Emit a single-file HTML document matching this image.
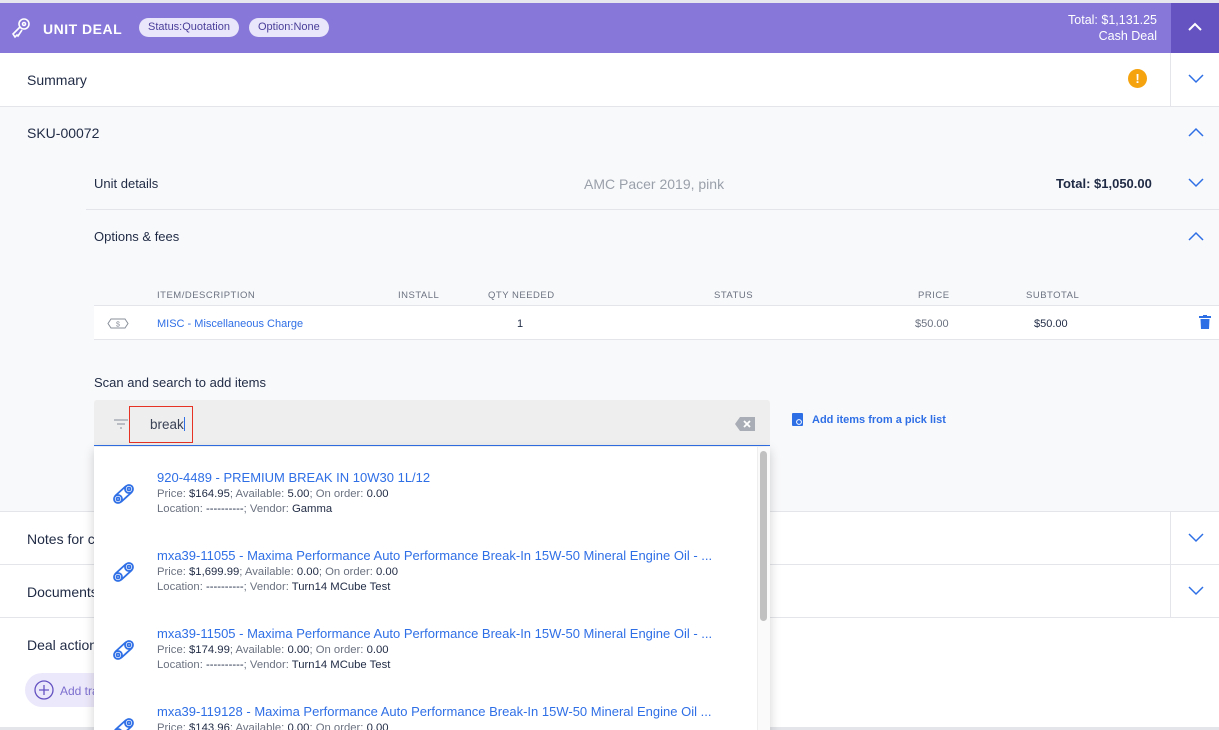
<!DOCTYPE html><html><head><style>
*{box-sizing:border-box;margin:0;padding:0}
html,body{width:1219px;height:730px;overflow:hidden}
body{font-family:"Liberation Sans",sans-serif;background:#fff;position:relative;color:#1f2a44}
.abs{position:absolute}
.hdr{left:0;top:3px;width:1219px;height:50px;background:#8677d9}
.pill{top:18px;height:19px;border-radius:10px;background:#e9e5fb;color:#4a3f99;font-size:11px;line-height:19px;padding:0 9px}
.row{left:0;width:1219px;border-bottom:1px solid #e3e5ea;background:#fff}
.t{font-size:14px;color:#1f2a44}
.sep{width:1px;background:#e3e5ea}
.th{font-size:9.5px;color:#6b7280;letter-spacing:.5px;top:290px}
.blue{color:#2f6fe6}
.it{left:157px;white-space:nowrap}
.it b{font-weight:normal;color:#1f2a44}
</style></head><body>
<div class="abs" style="left:0;top:0;width:1219px;height:3px;background:#e6e6ee"></div>
<div class="abs hdr"></div>
<div class="abs" style="left:1171px;top:3px;width:48px;height:50px;background:#6553c2"></div>
<svg class="abs" style="left:10px;top:17px" width="22" height="22" viewBox="0 0 22 22" fill="none" stroke="#fff" stroke-width="1.6"><circle cx="14" cy="7" r="5"/><circle cx="14" cy="7" r="1.5"/><path d="M10 10 L3 17 L5 20 L7 18 L8 19 L12 13"/></svg>
<div class="abs" style="left:43px;top:21px;color:#fff;font-size:14px;font-weight:bold;letter-spacing:.5px">UNIT DEAL</div>
<div class="abs pill" style="left:139px">Status:Quotation</div>
<div class="abs pill" style="left:249px">Option:None</div>
<div class="abs" style="right:62px;top:12px;color:#fff;font-size:12.5px;text-align:right;line-height:16px">Total: $1,131.25<br>Cash Deal</div>
<svg class="abs" style="left:1188px;top:22px" width="14" height="10" viewBox="0 0 14 10"><path d="M1 8 L7 2 L13 8" fill="none" stroke="#fff" stroke-width="2"/></svg>

<div class="abs row" style="top:53px;height:54px"></div>
<div class="abs t" style="left:27px;top:72px">Summary</div>
<div class="abs" style="left:1128px;top:69px;width:19px;height:19px;border-radius:50%;background:#f5a30f;color:#fff;font-size:13px;font-weight:bold;text-align:center;line-height:19px">!</div>
<div class="abs sep" style="left:1170px;top:53px;height:53px"></div>
<svg class="abs" style="left:1188px;top:74px" width="16" height="10" viewBox="0 0 16 10"><path d="M1 1 L8 8 L15 1" fill="none" stroke="#2f6fe6" stroke-width="1.5"/></svg>

<div class="abs" style="left:0;top:107px;width:1219px;height:405px;background:#f8f9fb;border-bottom:1px solid #e3e5ea"></div>
<div class="abs t" style="left:27px;top:125px">SKU-00072</div>
<svg class="abs" style="left:1188px;top:127px" width="16" height="10" viewBox="0 0 16 10"><path d="M1 9 L8 2 L15 9" fill="none" stroke="#2f6fe6" stroke-width="1.5"/></svg>
<div class="abs" style="left:94px;top:176px;font-size:13px">Unit details</div>
<div class="abs" style="left:584px;top:176px;font-size:14px;color:#9aa0aa">AMC Pacer 2019, pink</div>
<div class="abs" style="left:1056px;top:176px;font-size:13px;font-weight:bold">Total: $1,050.00</div>
<svg class="abs" style="left:1188px;top:178px" width="16" height="10" viewBox="0 0 16 10"><path d="M1 1 L8 8 L15 1" fill="none" stroke="#2f6fe6" stroke-width="1.5"/></svg>
<div class="abs" style="left:86px;top:209px;width:1133px;height:1px;background:#e3e5ea"></div>
<div class="abs" style="left:94px;top:229px;font-size:13px">Options &amp; fees</div>
<svg class="abs" style="left:1188px;top:231px" width="16" height="10" viewBox="0 0 16 10"><path d="M1 9 L8 2 L15 9" fill="none" stroke="#2f6fe6" stroke-width="1.5"/></svg>

<div class="abs th" style="left:157px">ITEM/DESCRIPTION</div>
<div class="abs th" style="left:398px">INSTALL</div>
<div class="abs th" style="left:488px">QTY NEEDED</div>
<div class="abs th" style="left:714px">STATUS</div>
<div class="abs th" style="left:918px">PRICE</div>
<div class="abs th" style="left:1026px">SUBTOTAL</div>
<div class="abs" style="left:94px;top:305px;width:1125px;height:35px;background:#fff;border-top:1px solid #e3e5ea;border-bottom:1px solid #e3e5ea"></div>
<svg class="abs" style="left:107px;top:318px" width="22" height="11" viewBox="0 0 22 11" fill="none" stroke="#8a909a"><path d="M4 1 H18 L21 5.5 L18 10 H4 L1 5.5 Z"/><text x="11" y="8.5" font-size="7" text-anchor="middle" fill="#8a909a" stroke="none" font-family="Liberation Sans">$</text></svg>
<div class="abs blue" style="left:157px;top:318px;font-size:11px">MISC - Miscellaneous Charge</div>
<div class="abs" style="left:517px;top:318px;font-size:11px">1</div>
<div class="abs" style="left:915px;top:318px;font-size:11px;color:#6b7280">$50.00</div>
<div class="abs" style="left:1034px;top:318px;font-size:11px">$50.00</div>
<svg class="abs" style="left:1199px;top:315px" width="12" height="14" viewBox="0 0 12 14" fill="#2f6fe6"><rect x="0" y="1" width="12" height="2"/><rect x="4" y="0" width="4" height="2"/><path d="M1.5 4 H10.5 L10 14 H2 Z"/></svg>

<div class="abs" style="left:94px;top:375px;font-size:13px">Scan and search to add items</div>
<div class="abs" style="left:94px;top:400px;width:676px;height:46px;background:#eeeeee;border-bottom:1.5px solid #2f6fe6;border-radius:3px 3px 0 0"></div>
<svg class="abs" style="left:113px;top:419px" width="16" height="10" viewBox="0 0 16 10" stroke="#9aa0aa" stroke-width="1.3"><path d="M1 1H15M4 5H12M7 9H9"/></svg>
<div class="abs" style="left:129px;top:406px;width:64px;height:37px;border:1.5px solid #e53225"></div>
<div class="abs" style="left:150px;top:417px;font-size:13.5px;color:#3a4256">break<span style="display:inline-block;width:1px;height:14px;background:#2f6fe6;vertical-align:-2px"></span></div>
<svg class="abs" style="left:734px;top:416px" width="22" height="16" viewBox="0 0 22 16"><path d="M6 1 H21 V15 H6 L1 8 Z" fill="#a9adb5"/><path d="M10 5 L16 11 M16 5 L10 11" stroke="#fff" stroke-width="1.8"/></svg>
<svg class="abs" style="left:792px;top:413px" width="11" height="13" viewBox="0 0 11 13"><rect x="0" y="0" width="11" height="13" rx="1" fill="#2f6fe6"/><circle cx="7" cy="9" r="2.4" fill="none" stroke="#fff" stroke-width="1"/></svg>
<div class="abs blue" style="left:812px;top:414px;font-size:11px;font-weight:bold">Add items from a pick list</div>

<div class="abs row" style="top:512px;height:53px"></div>
<div class="abs t" style="left:27px;top:531px">Notes for c</div>
<div class="abs sep" style="left:1170px;top:512px;height:52px"></div>
<svg class="abs" style="left:1188px;top:533px" width="16" height="10" viewBox="0 0 16 10"><path d="M1 1 L8 8 L15 1" fill="none" stroke="#2f6fe6" stroke-width="1.5"/></svg>
<div class="abs row" style="top:565px;height:53px"></div>
<div class="abs t" style="left:27px;top:584px">Documents</div>
<div class="abs sep" style="left:1170px;top:565px;height:52px"></div>
<svg class="abs" style="left:1188px;top:586px" width="16" height="10" viewBox="0 0 16 10"><path d="M1 1 L8 8 L15 1" fill="none" stroke="#2f6fe6" stroke-width="1.5"/></svg>
<div class="abs t" style="left:27px;top:637px">Deal actions</div>
<div class="abs" style="left:25px;top:673px;width:120px;height:34px;border-radius:17px;background:#ece8fb"></div>
<svg class="abs" style="left:34px;top:680px" width="20" height="20" viewBox="0 0 20 20" fill="none" stroke="#6553c2" stroke-width="1.3"><circle cx="10" cy="10" r="9"/><path d="M10 5V15M5 10H15"/></svg>
<div class="abs" style="left:60px;top:684px;font-size:12px;color:#7c6fcf">Add trade</div>
<div class="abs" style="left:0;top:727px;width:1219px;height:3px;background:#e3e5ea"></div>

<div class="abs" style="left:94px;top:447px;width:676px;height:290px;background:#fff;box-shadow:0 3px 10px rgba(0,0,0,.18)"></div>
<div class="abs" style="left:757px;top:447px;width:13px;height:290px;background:#fafafa;border-left:1px solid #eee"></div>
<div class="abs" style="left:760px;top:451px;width:7px;height:170px;border-radius:4px;background:#c1c1c1"></div>

<svg class="abs" style="left:112px;top:482px" width="24" height="24" viewBox="0 0 24 24" fill="none" stroke="#2f6fe6" stroke-width="1.8"><circle cx="6" cy="17" r="4"/><circle cx="6" cy="17" r="1.5"/><circle cx="17" cy="7" r="4"/><circle cx="17" cy="7" r="1.5"/><path d="M3 14 L14 4 M9 20 L20 10"/></svg>
<div class="abs it blue" style="top:470px;font-size:13px">920-4489 - PREMIUM BREAK IN 10W30 1L/12</div>
<div class="abs it" style="top:488px;font-size:11.3px;color:#6b7280">Price: <b>$164.95</b>; Available: <b>5.00</b>; On order: <b>0.00</b></div>
<div class="abs it" style="top:503px;font-size:11.3px;color:#6b7280">Location: <b>----------</b>; Vendor: <b>Gamma</b></div>

<svg class="abs" style="left:112px;top:560px" width="24" height="24" viewBox="0 0 24 24" fill="none" stroke="#2f6fe6" stroke-width="1.8"><circle cx="6" cy="17" r="4"/><circle cx="6" cy="17" r="1.5"/><circle cx="17" cy="7" r="4"/><circle cx="17" cy="7" r="1.5"/><path d="M3 14 L14 4 M9 20 L20 10"/></svg>
<div class="abs it blue" style="top:548px;font-size:13px">mxa39-11055 - Maxima Performance Auto Performance Break-In 15W-50 Mineral Engine Oil - ...</div>
<div class="abs it" style="top:566px;font-size:11.3px;color:#6b7280">Price: <b>$1,699.99</b>; Available: <b>0.00</b>; On order: <b>0.00</b></div>
<div class="abs it" style="top:581px;font-size:11.3px;color:#6b7280">Location: <b>----------</b>; Vendor: <b>Turn14 MCube Test</b></div>

<svg class="abs" style="left:112px;top:638px" width="24" height="24" viewBox="0 0 24 24" fill="none" stroke="#2f6fe6" stroke-width="1.8"><circle cx="6" cy="17" r="4"/><circle cx="6" cy="17" r="1.5"/><circle cx="17" cy="7" r="4"/><circle cx="17" cy="7" r="1.5"/><path d="M3 14 L14 4 M9 20 L20 10"/></svg>
<div class="abs it blue" style="top:626px;font-size:13px">mxa39-11505 - Maxima Performance Auto Performance Break-In 15W-50 Mineral Engine Oil - ...</div>
<div class="abs it" style="top:644px;font-size:11.3px;color:#6b7280">Price: <b>$174.99</b>; Available: <b>0.00</b>; On order: <b>0.00</b></div>
<div class="abs it" style="top:659px;font-size:11.3px;color:#6b7280">Location: <b>----------</b>; Vendor: <b>Turn14 MCube Test</b></div>

<svg class="abs" style="left:112px;top:716px" width="24" height="24" viewBox="0 0 24 24" fill="none" stroke="#2f6fe6" stroke-width="1.8"><circle cx="6" cy="17" r="4"/><circle cx="6" cy="17" r="1.5"/><circle cx="17" cy="7" r="4"/><circle cx="17" cy="7" r="1.5"/><path d="M3 14 L14 4 M9 20 L20 10"/></svg>
<div class="abs it blue" style="top:704px;font-size:13px">mxa39-119128 - Maxima Performance Auto Performance Break-In 15W-50 Mineral Engine Oil ...</div>
<div class="abs it" style="top:722px;font-size:11.3px;color:#6b7280">Price: <b>$143.96</b>; Available: <b>0.00</b>; On order: <b>0.00</b></div>
</body></html>
